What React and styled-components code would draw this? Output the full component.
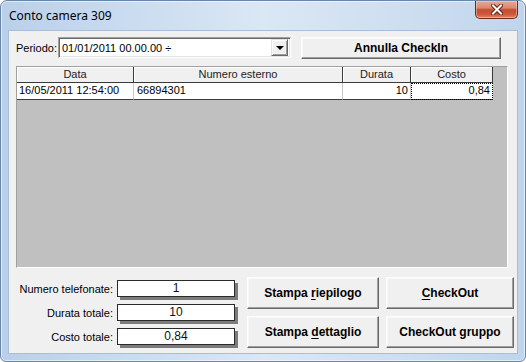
import React from 'react';
import styled, { createGlobalStyle } from 'styled-components';

const GlobalStyle = createGlobalStyle`
  html, body {
    margin: 0;
    padding: 0;
    background: #ffffff;
  }
  body {
    width: 526px;
    height: 362px;
    overflow: hidden;
    font-family: "Liberation Sans", Arial, sans-serif;
    color: #000;
  }
`;

const Window = styled.div`
  width: 526px;
  height: 362px;
  box-sizing: border-box;
  display: flex;
  flex-direction: column;
  border: 1px solid #6a86a8;
  border-radius: 7px 7px 6px 6px;
  background: linear-gradient(to right, #b9d0ea 0%, #cadcf0 25%, #dae7f5 50%, #cfdff1 75%, #bfd5ed 100%);
  box-shadow: inset 0 0 0 1px rgba(255, 255, 255, 0.55);
  padding: 0 7px 7px 7px;
`;

const TitleBar = styled.div`
  height: 29px;
  display: flex;
  align-items: flex-start;
  flex-shrink: 0;
`;

const Title = styled.div`
  font-family: "Noto Sans", "Open Sans", sans-serif;
  font-size: 12px;
  line-height: 29px;
  padding-left: 1px;
  color: #000;
  flex: 1;
`;

const CloseButton = styled.div`
  width: 43px;
  height: 18px;
  box-sizing: border-box;
  border: 1px solid #6e2a20;
  border-top: none;
  border-radius: 0 0 5px 5px;
  background: linear-gradient(to bottom, #e6a895 0%, #d98a74 40%, #c44b2f 52%, #cf5a3c 80%, #e08a66 100%);
  box-shadow: inset 0 0 0 1px rgba(255, 220, 210, 0.45);
  display: flex;
  align-items: center;
  justify-content: center;
`;

const Client = styled.div`
  flex: 1;
  box-sizing: border-box;
  background: #f0f0f0;
  border: 1px solid #a9bdd6;
  display: flex;
  flex-direction: column;
  padding: 6px 0 0 7px;
`;

const TopRow = styled.div`
  display: flex;
  align-items: center;
  height: 22px;
`;

const Label = styled.div`
  font-size: 11px;
  width: ${({ $w }) => $w}px;
  text-align: ${({ $align }) => $align || 'left'};
  flex-shrink: 0;
  white-space: nowrap;
`;

const Combo = styled.div`
  width: 233px;
  height: 21px;
  box-sizing: border-box;
  background: #fff;
  border: 1px solid;
  border-color: #a0a0a0 #ffffff #ffffff #a0a0a0;
  box-shadow: inset 1px 1px #696969, inset -1px -1px #e3e3e3;
  display: flex;
  align-items: center;
  padding: 0 2px 0 3px;
  margin-bottom: 1px;
`;

const ComboText = styled.div`
  flex: 1;
  font-size: 11px;
  white-space: nowrap;
`;

const DropButton = styled.div`
  width: 17px;
  height: 17px;
  box-sizing: border-box;
  background: #f0f0f0;
  border: 1px solid;
  border-color: #e3e3e3 #696969 #696969 #e3e3e3;
  box-shadow: inset 1px 1px #fff, inset -1px -1px #a0a0a0;
  display: flex;
  align-items: center;
  justify-content: center;
`;

const Arrow = styled.div`
  width: 0;
  height: 0;
  border-left: 4px solid transparent;
  border-right: 4px solid transparent;
  border-top: 4px solid #000;
  margin-top: 1px;
`;

const Button = styled.div`
  width: ${({ $w }) => $w}px;
  height: ${({ $h }) => $h}px;
  box-sizing: border-box;
  background: #f0f0f0;
  border: 1px solid;
  border-color: #ffffff #696969 #696969 #ffffff;
  box-shadow: inset -1px -1px #a0a0a0, inset 1px 1px #f8f8f8;
  font-size: 12px;
  font-weight: bold;
  display: flex;
  align-items: center;
  justify-content: center;
  white-space: nowrap;
  margin-left: ${({ $ml }) => $ml || 0}px;

  u {
    text-decoration: underline;
    text-underline-offset: 2px;
  }
`;

const Grid = styled.div`
  margin-top: 7px;
  width: 492px;
  height: 202px;
  box-sizing: border-box;
  background: #c0c0c0;
  border: 1px solid;
  border-color: #a0a0a0 #ffffff #ffffff #a0a0a0;
  display: flex;
  flex-direction: column;
`;

const Row = styled.div`
  display: grid;
  grid-template-columns: 117px 209px 68px 82px;
  width: 476px;
  height: ${({ $h }) => $h}px;
`;

const HeadCell = styled.div`
  box-sizing: border-box;
  background: #f0f0f0;
  border-right: 1px solid #3a3a3a;
  border-bottom: 1px solid #3a3a3a;
  box-shadow: inset 1px 1px #ffffff;
  font-size: 11px;
  text-align: center;
  line-height: 15px;
  color: #222;
  white-space: nowrap;
  overflow: hidden;
`;

const Cell = styled.div`
  box-sizing: border-box;
  background: #fff;
  border-right: 1px solid ${({ $focus }) => ($focus ? 'transparent' : '#c8c8c8')};
  border-bottom: 1px solid #3a3a3a;
  outline: ${({ $focus }) => ($focus ? '1px dotted #000' : 'none')};
  outline-offset: -1px;
  font-size: 11px;
  line-height: 15px;
  text-align: ${({ $align }) => $align || 'left'};
  padding: 0 ${({ $align }) => ($align === 'right' ? '2px' : '0')} 0 ${({ $pl }) => $pl || 0}px;
  white-space: nowrap;
  overflow: hidden;
`;

const Bottom = styled.div`
  margin-top: 9px;
  display: flex;
  align-items: flex-start;
`;

const Fields = styled.div`
  display: flex;
  flex-direction: column;
  gap: 7px;
  padding-top: 3px;
`;

const FieldRow = styled.div`
  display: flex;
  align-items: center;
  height: 17px;
`;

const ValueBox = styled.div`
  width: 118px;
  height: 17px;
  box-sizing: border-box;
  margin-left: 4px;
  background: #fff;
  border: 1px solid #2a2a2a;
  box-shadow: 3px 3px 0 #7c7c7c;
  font-size: 12px;
  line-height: 15px;
  text-align: center;
  color: #111;
`;

const ButtonGrid = styled.div`
  margin-left: 12px;
  display: grid;
  grid-template-columns: 132px 128px;
  grid-auto-rows: 32px;
  gap: 7px;
`;

const fields = [
  { label: 'Numero telefonate:', value: '1' },
  { label: 'Durata totale:', value: '10' },
  { label: 'Costo totale:', value: '0,84' },
];

export default function App() {
  return (
    <>
      <GlobalStyle />
      <Window>
        <TitleBar>
          <Title>Conto camera 309</Title>
          <CloseButton>
            <svg width="12" height="11" viewBox="0 0 12 11">
              <path d="M2 1.5 L10 9.5 M10 1.5 L2 9.5" stroke="#5a2118" strokeWidth="4" strokeLinecap="square" />
              <path d="M2 1.5 L10 9.5 M10 1.5 L2 9.5" stroke="#ffffff" strokeWidth="2" strokeLinecap="square" />
            </svg>
          </CloseButton>
        </TitleBar>
        <Client>
          <TopRow>
            <Label $w={42}>Periodo:</Label>
            <Combo>
              <ComboText>01/01/2011 00.00.00 ÷</ComboText>
              <DropButton><Arrow /></DropButton>
            </Combo>
            <Button $w={200} $h={22} $ml={10}><span>Annulla CheckIn</span></Button>
          </TopRow>

          <Grid>
            <Row $h={16}>
              <HeadCell>Data</HeadCell>
              <HeadCell>Numero esterno</HeadCell>
              <HeadCell>Durata</HeadCell>
              <HeadCell>Costo</HeadCell>
            </Row>
            <Row $h={17}>
              <Cell $pl={2}>16/05/2011 12:54:00</Cell>
              <Cell $pl={3}>66894301</Cell>
              <Cell $align="right">10</Cell>
              <Cell $align="right" $focus>0,84</Cell>
            </Row>
          </Grid>

          <Bottom>
            <Fields>
              {fields.map((f) => (
                <FieldRow key={f.label}>
                  <Label $w={97} $align="right">{f.label}</Label>
                  <ValueBox>{f.value}</ValueBox>
                </FieldRow>
              ))}
            </Fields>
            <ButtonGrid>
              <Button $w={132} $h={32}><span>Stampa <u>r</u>iepilogo</span></Button>
              <Button $w={128} $h={32}><span><u>C</u>heckOut</span></Button>
              <Button $w={132} $h={32}><span>Stampa <u>d</u>ettaglio</span></Button>
              <Button $w={128} $h={32}><span>CheckOut gruppo</span></Button>
            </ButtonGrid>
          </Bottom>
        </Client>
      </Window>
    </>
  );
}
